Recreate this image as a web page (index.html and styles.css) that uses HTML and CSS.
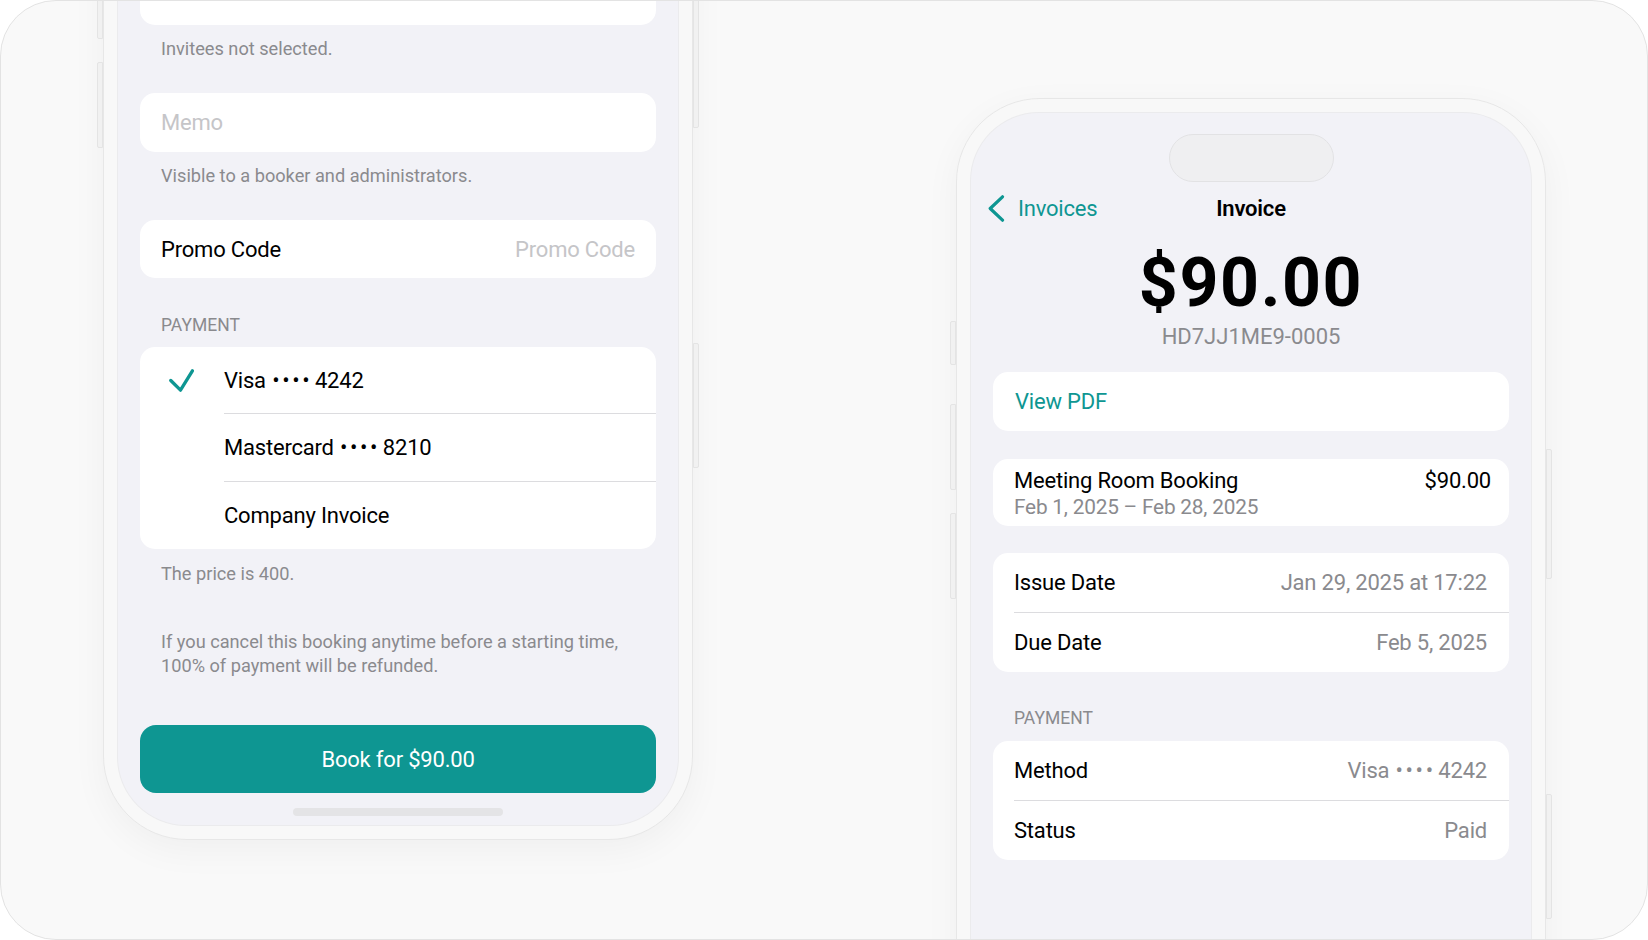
FILE: index.html
```html
<!DOCTYPE html>
<html lang="en">
<head>
  <meta charset="UTF-8" />
  <meta name="viewport" content="width=device-width, initial-scale=1.0" />
  <title>Booking &amp; Invoice</title>
  <link rel="stylesheet" href="styles.css">
</head>
<body>
  <div class="canvas">
    <div class="stage">

      <!-- booking form, scrolled to the bottom -->
      <div class="phone phone-booking">
        <span class="side-btn left b1"></span>
        <span class="side-btn left b2"></span>
        <span class="side-btn left b3"></span>
        <span class="side-btn right b4"></span>
        <span class="side-btn right b5"></span>
        <div class="screen screen-bottom">
          <div class="form">
            <div class="card field"></div>
            <p class="footnote">Invitees not selected.</p>

            <div class="card field gap-lg">
              <span class="placeholder">Memo</span>
            </div>
            <p class="footnote">Visible to a booker and administrators.</p>

            <div class="card field field-split gap-lg">
              <span>Promo Code</span>
              <span class="placeholder">Promo Code</span>
            </div>

            <h4 class="section-title">Payment</h4>
            <div class="card pay-list">
              <div class="pay-row">
                <span class="pay-check">
                  <svg width="25" height="23" viewBox="0 0 25 23"><polyline points="1.8,11.5 11.5,21.2 23.4,1.8" fill="none" stroke="#0e9692" stroke-width="3.3" stroke-linecap="round" stroke-linejoin="round"/></svg>
                </span>
                <span class="pay-label">Visa <span class="dots">••••</span> 4242</span>
              </div>
              <div class="pay-row">
                <span class="pay-check"></span>
                <span class="pay-label">Mastercard <span class="dots">••••</span> 8210</span>
              </div>
              <div class="pay-row">
                <span class="pay-check"></span>
                <span class="pay-label">Company Invoice</span>
              </div>
            </div>
            <p class="footnote price-note">The price is 400.</p>

            <p class="footnote cancel-note">If you cancel this booking anytime before a starting time,<br>100% of payment will be refunded.</p>

            <button class="book-btn">Book for $90.00</button>
          </div>
          <div class="home-bar"></div>
        </div>
      </div>

      <!-- invoice details -->
      <div class="phone phone-invoice">
        <span class="side-btn left b1"></span>
        <span class="side-btn left b2"></span>
        <span class="side-btn left b3"></span>
        <span class="side-btn right b4"></span>
        <span class="side-btn right b5"></span>
        <div class="screen">
          <div class="island"></div>
          <div class="navbar">
            <a class="back" href="#">
              <svg width="17" height="27" viewBox="0 0 17 27"><polyline points="14.5,1.8 2.2,13.5 14.5,25.2" fill="none" stroke="#0e9692" stroke-width="3.2" stroke-linecap="round" stroke-linejoin="round"/></svg>
              Invoices
            </a>
            <span class="nav-title">Invoice</span>
            <span></span>
          </div>

          <div class="amount">$90.00</div>
          <div class="invoice-no">HD7JJ1ME9-0005</div>

          <div class="details">
            <div class="card link-card">View PDF</div>

            <div class="card line-item">
              <div class="line-main">
                <span>Meeting Room Booking</span>
                <span>$90.00</span>
              </div>
              <div class="line-sub">Feb 1, 2025 – Feb 28, 2025</div>
            </div>

            <div class="card list-card dates">
              <div class="row"><span>Issue Date</span><span class="value">Jan 29, 2025 at 17:22</span></div>
              <div class="row"><span>Due Date</span><span class="value">Feb 5, 2025</span></div>
            </div>

            <h4 class="section-title">Payment</h4>
            <div class="card list-card">
              <div class="row"><span>Method</span><span class="value">Visa <span class="dots">••••</span> 4242</span></div>
              <div class="row"><span>Status</span><span class="value">Paid</span></div>
            </div>
          </div>
        </div>
      </div>

    </div>
  </div>
</body>
</html>
```

FILE: styles.css
```css
body {
  margin: 0;
  background: #fff;
  font-family: Roboto, "Liberation Sans", sans-serif;
  color: #000;
}
.canvas {
  height: 940px;
  box-sizing: border-box;
  border: 1px solid #e3e3e3;
  border-radius: 56px;
  background: #f9f9f9;
  overflow: hidden;
}
.stage {
  display: flex;
  align-items: flex-start;
  gap: 263px;
  padding-left: 102px;
}

/* phone shell */
.phone {
  position: relative;
  flex: none;
  width: 590px;
  height: 1193px;
  box-sizing: border-box;
  padding: 14px;
  background: #f8f8f8;
  border: 1px solid #e7e7e7;
  border-radius: 84px;
  box-shadow: 0 10px 36px rgba(0, 0, 0, 0.045);
}
.phone-booking {
  margin-top: -354px;
}
.phone-invoice {
  margin-top: 97px;
}
.side-btn {
  position: absolute;
  width: 4px;
  background: #f1f1f1;
  border: 1px solid #e4e4e4;
}
.side-btn.left {
  left: -7px;
  border-radius: 2px 0 0 2px;
}
.side-btn.right {
  right: -7px;
  border-radius: 0 2px 2px 0;
}
.b1 { top: 222px; height: 42px; }
.b2 { top: 305px; height: 84px; }
.b3 { top: 414px; height: 84px; }
.b4 { top: 350px; height: 128px; }
.b5 { top: 695px; height: 123px; }

.screen {
  position: relative;
  height: 100%;
  box-sizing: border-box;
  background: #f2f2f7;
  border-radius: 68px;
  box-shadow: 0 0 0 1px #ebebed;
  overflow: hidden;
}
.screen-bottom {
  display: flex;
  flex-direction: column;
  justify-content: flex-end;
}
.home-bar {
  position: absolute;
  left: 50%;
  bottom: 9px;
  width: 210px;
  height: 8px;
  margin-left: -105px;
  border-radius: 4px;
  background: #e4e4e6;
}

/* shared list pieces */
.card {
  background: #fff;
  border-radius: 15px;
  font-size: 22px;
  letter-spacing: -0.2px;
}
.dots {
  letter-spacing: 2.6px;
  margin-right: -2.6px;
  padding-left: 1px;
}
.placeholder {
  color: #c5c5c8;
}
.footnote {
  margin: 13px 0 0;
  padding-left: 21px;
  font-size: 18.2px;
  line-height: 22px;
  color: #8a8a8e;
}
.section-title {
  margin: 37px 0 12px;
  padding-left: 21px;
  font-size: 17.5px;
  line-height: 20px;
  font-weight: 400;
  text-transform: uppercase;
  color: #8a8a8e;
}

/* booking form */
.form {
  padding: 0 22px 32px;
}
.field {
  display: flex;
  align-items: center;
  height: 59px;
  padding: 0 21px;
}
.field-split {
  justify-content: space-between;
  height: 58px;
}
.gap-lg {
  margin-top: 33px;
}
.pay-row {
  display: flex;
  height: 67.3px;
}
.pay-check {
  width: 84px;
  padding-left: 29px;
  box-sizing: border-box;
  display: flex;
  align-items: center;
}
.pay-label {
  flex: 1;
  display: flex;
  align-items: center;
  white-space: pre;
  border-bottom: 1px solid #dcdcdf;
}
.pay-row:last-child .pay-label {
  border-bottom: none;
}
.price-note {
  margin-top: 14px;
}
.cancel-note {
  margin-top: 45px;
  line-height: 24px;
}
.book-btn {
  display: block;
  width: 100%;
  height: 68px;
  margin-top: 47px;
  border: none;
  border-radius: 16px;
  background: #0e9692;
  color: #fff;
  font-family: inherit;
  font-size: 22px;
  letter-spacing: -0.2px;
}

/* invoice screen */
.island {
  width: 165px;
  height: 48px;
  margin: 21px auto 0;
  box-sizing: border-box;
  border-radius: 24px;
  background: #efeff1;
  border: 1px solid #e2e2e4;
}
.navbar {
  display: grid;
  grid-template-columns: 1fr auto 1fr;
  align-items: center;
  height: 44px;
  margin-top: 4px;
  padding: 0 17px;
  font-size: 22px;
  letter-spacing: -0.2px;
}
.back {
  display: flex;
  align-items: center;
  gap: 13px;
  color: #0e9692;
  text-decoration: none;
}
.nav-title {
  font-weight: 600;
}
.amount {
  margin-top: 20px;
  font-size: 68px;
  line-height: 67px;
  font-weight: 700;
  text-align: center;
  letter-spacing: 1.6px;
}
.invoice-no {
  margin-top: 7px;
  font-size: 22px;
  line-height: 26px;
  text-align: center;
  color: #8a8a8e;
}
.details {
  padding: 22px 22px 0;
}
.link-card {
  display: flex;
  align-items: center;
  height: 59px;
  padding-left: 22px;
  color: #0e9692;
}
.line-item {
  margin-top: 28px;
  padding: 8px 18px 5px 21px;
  line-height: 27px;
}
.line-main {
  display: flex;
  justify-content: space-between;
}
.line-sub {
  font-size: 20.8px;
  color: #8a8a8e;
}
.list-card {
  padding-left: 21px;
}
.dates {
  margin-top: 27px;
}
.row {
  display: flex;
  justify-content: space-between;
  align-items: center;
  height: 59.5px;
  padding-right: 22px;
  box-sizing: border-box;
  border-bottom: 1px solid #dcdcdf;
}
.row:last-child {
  border-bottom: none;
}
.value {
  color: #8a8a8e;
}
.details .section-title {
  margin: 36px 0 13px;
}
```
